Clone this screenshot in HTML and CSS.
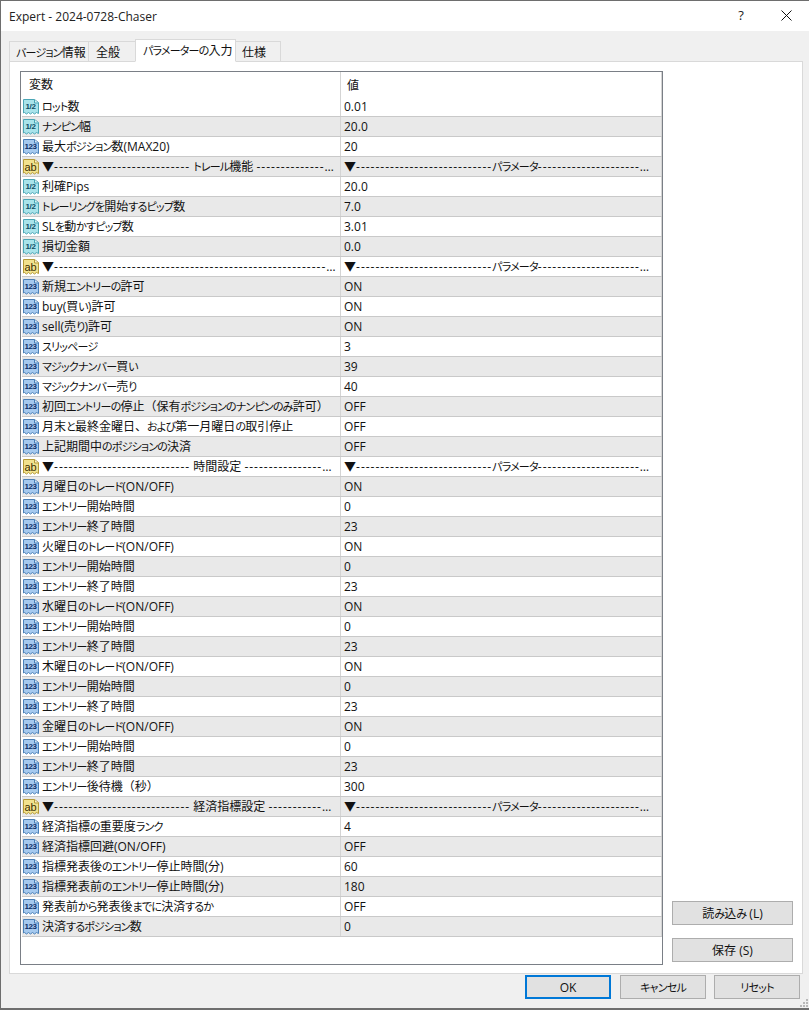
FILE: index.html
```html
<!DOCTYPE html>
<html lang="ja">
<head>
<meta charset="utf-8">
<title>Expert - 2024-0728-Chaser</title>
<link rel="stylesheet" href="styles.css">
</head>
<body>
<svg class="defs" width="0" height="0" aria-hidden="true">
  <symbol id="doc" viewBox="0 0 16 16">
    <path class="doc-body" d="M0.5 0.5 H11.5 L15.5 3.5 V14.5 L13.5 13.5 L11.5 15 L9.5 13.5 L7.5 15 L5.5 13.5 L3.5 15 L1.5 13.5 L0.5 14 Z"/>
    <path class="doc-fold" d="M11.5 0.5 V4 H15.5"/>
  </symbol>
</svg>
<div class="window">
  <header class="titlebar">
    <span class="title">Expert - 2024-0728-Chaser</span>
    <span class="help">?</span>
    <svg class="close" width="11" height="11" viewBox="0 0 11 11"><path d="M0.5 0.5 L10.5 10.5 M10.5 0.5 L0.5 10.5"/></svg>
  </header>
  <div class="dialog">
    <nav class="tabs">
      <span class="tab t1 jp">バージョン情報</span>
      <span class="tab t2 jp">全般</span>
      <span class="tab active jp">パラメーターの入力</span>
      <span class="tab t4 jp">仕様</span>
    </nav>
    <section class="panel">
      <div class="list">
        <div class="row head"><span class="c1">変数</span><span class="c2">値</span></div>
        <div id="rows"></div>
      </div>
      <aside class="side">
        <button class="btn sbtn jp">読み込み (L)</button>
        <button class="btn sbtn jp">保存 (S)</button>
      </aside>
    </section>
    <footer class="foot">
      <button class="btn fbtn ok">OK</button>
      <button class="btn fbtn jp">キャンセル</button>
      <button class="btn fbtn jp">リセット</button>
    </footer>
    <svg class="grip" width="10" height="10" viewBox="0 0 10 10"><path d="M7 1h2v2H7zM4 4h2v2H4zM7 4h2v2H7zM1 7h2v2H1zM4 7h2v2H4zM7 7h2v2H7z"/></svg>
  </div>
</div>
<script src="app.js"></script>
</body>
</html>
```
FILE: styles.css
```css
* { box-sizing: border-box; }
html, body { margin: 0; padding: 0; height: 100%; overflow: hidden; background: #fff; }
body { font-family: "Open Sans", "Noto Sans CJK JP", sans-serif; font-size: 12px; color: #111; }
.defs { position: absolute; }
.window { width: 809px; height: 1010px; display: flex; flex-direction: column; border-top: 1px solid #6e6e6e; border-left: 1px solid #6e6e6e; border-bottom: 2px solid #6e6e6e; }
.titlebar { height: 30px; flex: none; background: #fff; display: flex; align-items: center; padding-left: 8px; }
.title { flex: 1; font-size: 12px; color: #222; }
.help { width: 16px; margin-right: 32px; text-align: center; font-size: 13px; color: #222; margin-top: -2px; }
.close { margin-right: 17px; fill: none; stroke: #111; stroke-width: 1; margin-top: -1px; }
.dialog { flex: 1; position: relative; background: #f0f0f0; padding: 0 0 0 8px; display: flex; flex-direction: column; min-height: 0; }
.tabs { display: flex; align-items: flex-end; height: 31px; flex: none; padding-left: 1px; position: relative; z-index: 1; margin-bottom: -1px; }
.tab { height: 21px; background: #f0f0f0; border: 1px solid #d9d9d9; margin-left: -1px; display: flex; align-items: center; padding: 1px 0 0 6px; font-size: 12px; white-space: nowrap; }
.t1 { width: 80px; }
.t2 { width: 48px; padding-left: 7px; }
.t4 { width: 46px; }
.active { width: 101px; height: 23px; background: #fff; border-bottom-color: #fff; padding: 0 0 1px 7px; z-index: 2; }
.panel { width: 794px; height: 913px; flex: none; background: #fff; border: 1px solid #d9d9d9; padding: 9px 9px 8px 10px; display: flex; }
.list { width: 643px; height: 894px; flex: none; border: 1px solid #7a7f86; padding-left: 1px; background: #fff; }
.row { display: flex; height: 20px; border-bottom: 1px solid #c9c9c9; background: #fff; line-height: 20px; }
.row.alt { background: #e9e9e9; }
.head { height: 25px; border-bottom: none; line-height: 27px; }
.c1 { width: 319px; flex: none; border-right: 1px solid #d4d4d4; display: flex; align-items: center; padding-left: 1px; min-width: 0; }
.c2 { flex: 1; min-width: 0; padding: 0 7px 0 3px; border-right: 1px solid #d4d4d4; white-space: nowrap; overflow: hidden; text-overflow: ellipsis; }
.head .c1 { padding-left: 7px; }
.head .c2 { padding-left: 6px; }
.name { margin-left: 3px; white-space: nowrap; overflow: hidden; text-overflow: ellipsis; min-width: 0; flex: 1; padding-right: 4px; }
.dash { letter-spacing: 1px; }
.k { font-size: 11px; letter-spacing: -0.8px; font-feature-settings: "palt"; }
.ico { width: 16px; height: 16px; flex: none; position: relative; display: block; }
.ico svg { display: block; width: 16px; height: 16px; }
.doc-body { stroke-width: 1; fill: var(--doc-fill); stroke: var(--doc-line); }
.doc-fold { fill: #fff; fill-opacity: .55; stroke-width: 1; stroke: var(--doc-line); }
.ico em { position: absolute; left: 0; right: 1px; top: 3px; text-align: center; font-style: normal; font-family: "Liberation Sans", sans-serif; line-height: 10px; white-space: nowrap; }
.ifrac { --doc-fill: #a9e3ea; --doc-line: #4ba6b6; }
.ifrac em { font-size: 8px; letter-spacing: -0.3px; font-weight: 700; color: #0e4d66; }
.iint { --doc-fill: #a5c9ee; --doc-line: #4a80b8; }
.iint em { font-size: 8px; letter-spacing: -0.4px; font-weight: 700; color: #0d2f66; }
.istr { --doc-fill: #f2e28e; --doc-line: #b49a38; }
.istr em { font-size: 11px; color: #3a2e00; }
.side { flex: 1; display: flex; flex-direction: column; align-items: flex-start; justify-content: flex-end; gap: 13px; padding: 0 0 3px 9px; }
.btn { font: inherit; color: #111; background: #e1e1e1; border: 1px solid #adadad; padding: 0; }
.sbtn { width: 121px; height: 24px; }
.foot { flex: 1; display: flex; justify-content: flex-end; align-items: flex-start; gap: 8px; padding: 1px 9px 0 0; }
.fbtn { width: 86px; height: 24px; }
.ok { border: 2px solid #0078d7; margin-right: 1px; }
.grip { position: absolute; right: 0; bottom: 0; fill: #b8b8b8; }
```
FILE: app.js
```js
var D = "▼";
var H = "----------------------------";
var P = "▼----------------------------パラメータ-----------------------------------------------";
var rows = [
 ["f","ロット数","0.01"],["f","ナンピン幅","20.0"],["i","最大ポジション数(MAX20)","20"],
 ["s",D+H+" トレール機能 ----------------------------------------",P],
 ["f","利確Pips","20.0"],["f","トレーリングを開始するピップ数","7.0"],["f","SLを動かすピップ数","3.01"],["f","損切金額","0.0"],
 ["s",D+H+"--------------------------------------------------------------",P],
 ["i","新規エントリーの許可","ON"],["i","buy(買い)許可","ON"],["i","sell(売り)許可","ON"],["i","スリッページ","3"],
 ["i","マジックナンバー買い","39"],["i","マジックナンバー売り","40"],["i","初回エントリーの停止（保有ポジションのナンピンのみ許可）","OFF"],
 ["i","月末と最終金曜日、および第一月曜日の取引停止","OFF"],["i","上記期間中のポジションの決済","OFF"],
 ["s",D+H+" 時間設定 ----------------------------------------",P]
];
["月","火","水","木","金"].forEach(function (d) {
  rows.push(["i",d+"曜日のトレード(ON/OFF)","ON"],["i","エントリー開始時間","0"],["i","エントリー終了時間","23"]);
});
rows.push(["i","エントリー後待機（秒）","300"],
 ["s",D+H+" 経済指標設定 ----------------------------------------",P],
 ["i","経済指標の重要度ランク","4"],["i","経済指標回避(ON/OFF)","OFF"],["i","指標発表後のエントリー停止時間(分)","60"],
 ["i","指標発表前のエントリー停止時間(分)","180"],["i","発表前から発表後までに決済するか","OFF"],["i","決済するポジション数","0"]);
var cls = {f:"ifrac",i:"iint",s:"istr"}, lab = {f:"1/2",i:"123",s:"ab"};
var wrap = document.getElementById("rows");
function run(el, cl, text) {
  var s = document.createElement("span"); s.className = cl; s.textContent = text; el.appendChild(s);
}
function fill(el, text) {
  text.split(/(-{2,}|[\u3040-\u30ff]+)/).forEach(function (part) {
    if (/^-{2,}$/.test(part)) run(el, "dash", part);
    else if (/^[\u3040-\u30ff]+$/.test(part)) run(el, "k", part);
    else if (part) el.appendChild(document.createTextNode(part));
  });
}
Array.prototype.forEach.call(document.querySelectorAll(".jp"), function (el) {
  var t = el.textContent; el.textContent = ""; fill(el, t);
});
rows.forEach(function (r, n) {
  var row = document.createElement("div");
  row.className = "row" + (n % 2 ? " alt" : "");
  var c1 = document.createElement("span"); c1.className = "c1";
  var ico = document.createElement("span"); ico.className = "ico " + cls[r[0]];
  ico.innerHTML = '<svg viewBox="0 0 16 16"><use href="#doc"/></svg><em>' + lab[r[0]] + "</em>";
  var name = document.createElement("span"); name.className = "name"; fill(name, r[1]);
  c1.appendChild(ico); c1.appendChild(name);
  var c2 = document.createElement("span"); c2.className = "c2"; fill(c2, r[2]);
  row.appendChild(c1); row.appendChild(c2);
  wrap.appendChild(row);
});
```
